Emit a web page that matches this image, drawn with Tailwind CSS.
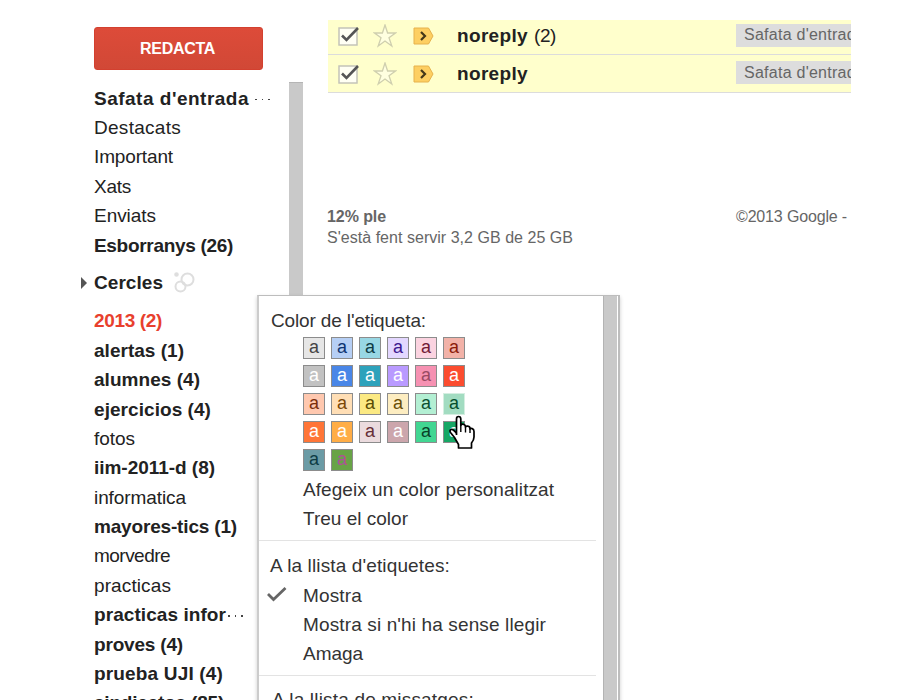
<!DOCTYPE html>
<html lang="ca">
<head>
<meta charset="utf-8">
<title>Correu</title>
<script src="https://cdn.jsdelivr.net/npm/@tailwindcss/browser@4"></script>
</head>
<body class="bg-white">
<div class="relative flex w-[900px] h-[700px] overflow-hidden bg-white font-['Liberation_Sans',Arial,sans-serif] text-[19px] text-[#222] whitespace-nowrap">

  <!-- Sidebar -->
  <aside class="w-[289px] shrink-0 pt-[27px] pl-[94px]">
    <button class="flex w-[169px] h-[43px] items-center justify-center rounded-[3px] border border-[#d3402f] bg-linear-to-b from-[#dd4b39] to-[#d14836] pr-[2px] text-[16px] font-bold text-white"><span class="font-bold" data-size="16" data-w="75">REDACTA</span></button>
    <nav class="mt-[13.6px] flex flex-col leading-[29.4px]">
      <div class="h-[29.4px] font-bold"><span data-w="155">Safata d'entrada</span><span class="ml-[6px] inline-flex gap-[5px] align-middle"><i class="size-[1.5px] bg-[#444]"></i><i class="size-[1.5px] bg-[#444]"></i><i class="size-[1.5px] bg-[#444]"></i></span></div>
      <div class="h-[29.4px]"><span data-w="87">Destacats</span></div>
      <div class="h-[29.4px]"><span data-w="79">Important</span></div>
      <div class="h-[29.4px]"><span data-w="37">Xats</span></div>
      <div class="h-[29.4px]"><span data-w="62">Enviats</span></div>
      <div class="h-[29.4px] font-bold"><span data-w="139">Esborranys (26)</span></div>
      <div class="-ml-[13px] my-[8.5px] flex h-[29.4px] items-center font-bold">
        <svg class="mr-[7px]" width="6" height="12" viewBox="0 0 6 12"><path d="M0 0L6 6L0 12Z" fill="#555"/></svg>
        <span data-w="69">Cercles</span>
        <svg class="ml-[10px]" width="24" height="24" viewBox="0 0 24 24" fill="none" stroke="#dedede" stroke-width="2"><circle cx="14.500" cy="8.500" r="6"/><circle cx="7.500" cy="15.500" r="5"/><circle cx="3.500" cy="3.500" r="1.300" fill="#dedede"/></svg>
      </div>
      <div class="h-[29.4px] font-bold text-[#e8402d]"><span data-w="68">2013 (2)</span></div>
      <div class="h-[29.4px] font-bold"><span data-w="90">alertas (1)</span></div>
      <div class="h-[29.4px] font-bold"><span data-w="106">alumnes (4)</span></div>
      <div class="h-[29.4px] font-bold"><span data-w="117">ejercicios (4)</span></div>
      <div class="h-[29.4px]"><span data-w="41">fotos</span></div>
      <div class="h-[29.4px] font-bold"><span data-w="121">iim-2011-d (8)</span></div>
      <div class="h-[29.4px]"><span data-w="92">informatica</span></div>
      <div class="h-[29.4px] font-bold"><span data-w="143">mayores-tics (1)</span></div>
      <div class="h-[29.4px]"><span data-w="76">morvedre</span></div>
      <div class="h-[29.4px]"><span data-w="77">practicas</span></div>
      <div class="h-[29.4px] font-bold"><span data-w="132">practicas infor</span><span class="ml-[2px] inline-flex gap-[5px] align-middle"><i class="size-[1.5px] bg-[#444]"></i><i class="size-[1.5px] bg-[#444]"></i><i class="size-[1.5px] bg-[#444]"></i></span></div>
      <div class="h-[29.4px] font-bold"><span data-w="89">proves (4)</span></div>
      <div class="h-[29.4px] font-bold"><span data-w="129">prueba UJI (4)</span></div>
      <div class="h-[29.4px] font-bold"><span data-w="130">sindicatos (85)</span></div>
    </nav>
  </aside>
  <div class="mt-[82px] w-[14px] shrink-0 bg-[#c9c9c9] border-t border-[#b5b5b5]"></div>

  <!-- Message list -->
  <main class="ml-[24px] mt-[20px] w-[524px] overflow-hidden">
    <div class="ml-px flex h-[35px] items-center border-b border-[#dcdcdc] bg-[#ffffcc] pb-[2px] pl-[10px]">
      <svg class="shrink-0" width="22" height="20" viewBox="0 0 22 20"><rect x="1" y="2" width="18" height="17" fill="#fffff4" stroke="#c4c4b8" stroke-width="1.500"/><path d="M4 9.500L8.500 14L20 2" fill="none" stroke="#555" stroke-width="2.600"/></svg>
      <svg class="ml-[13px] shrink-0" width="24" height="24" viewBox="0 0 24 24" fill="#ffffe0" stroke="#cfcfae" stroke-width="1.300"><path d="M12 1L14.600 9H22.500L16 13.800L18.800 22L12 17L5.200 22L8 13.800L1.500 9H9.400Z"/></svg>
      <svg class="ml-[16px] shrink-0" width="22" height="18" viewBox="0 0 22 18"><path d="M1 1H15.500L20 9L15.500 17H1Z" fill="#fdcf62" stroke="#e6b24c"/><path d="M8 5L12 9L8 13" fill="none" stroke="#443719" stroke-width="2.200"/></svg>
      <span class="ml-[22px] w-[279px] shrink-0"><b data-w="71">noreply</b><span class="ml-[6px]" data-w="22">(2)</span></span>
      <span class="mb-[2px] flex h-[23px] w-[125px] shrink-0 items-center bg-[#dddddd] pl-[8px] text-[16px] text-[#666]"><span data-size="16" data-w="121">Safata d'entrada</span></span>
    </div>
    <div class="ml-px flex h-[38px] items-center border-b border-[#dcdcdc] bg-[#ffffcc] pl-[10px] pt-px">
      <svg class="shrink-0" width="22" height="20" viewBox="0 0 22 20"><rect x="1" y="2" width="18" height="17" fill="#fffff4" stroke="#c4c4b8" stroke-width="1.500"/><path d="M4 9.500L8.500 14L20 2" fill="none" stroke="#555" stroke-width="2.600"/></svg>
      <svg class="ml-[13px] shrink-0" width="24" height="24" viewBox="0 0 24 24" fill="#ffffe0" stroke="#cfcfae" stroke-width="1.300"><path d="M12 1L14.600 9H22.500L16 13.800L18.800 22L12 17L5.200 22L8 13.800L1.500 9H9.400Z"/></svg>
      <svg class="ml-[16px] shrink-0" width="22" height="18" viewBox="0 0 22 18"><path d="M1 1H15.500L20 9L15.500 17H1Z" fill="#fdcf62" stroke="#e6b24c"/><path d="M8 5L12 9L8 13" fill="none" stroke="#443719" stroke-width="2.200"/></svg>
      <span class="ml-[22px] w-[279px] shrink-0"><b data-w="71">noreply</b></span>
      <span class="mb-[3px] flex h-[23px] w-[125px] shrink-0 items-center bg-[#dddddd] pl-[8px] text-[16px] text-[#666]"><span data-size="16" data-w="121">Safata d'entrada</span></span>
    </div>
    <footer class="mt-[113px] flex text-[16px] leading-[21px] text-[#666]">
      <div class="w-[409px]">
        <div class="font-bold"><span data-size="16" data-w="59">12% ple</span></div>
        <div><span data-size="16" data-w="246">S'està fent servir 3,2 GB de 25 GB</span></div>
      </div>
      <div><span data-size="16" data-w="111">©2013 Google -</span></div>
    </footer>
  </main>

  <!-- Label menu -->
  <div class="absolute left-[257px] top-[295px] flex h-[420px] w-[363px] justify-between border-2 border-t border-[#cccccc] border-t-[#bdbdbd] border-r-[#bdbdbd] bg-white text-[#333] shadow-[0_2px_4px_rgba(0,0,0,0.2)]">
    <div class="w-[337px] pt-[10px] leading-[29.4px]">
      <div class="h-[29.4px] pl-[12px]"><span data-w="155">Color de l'etiqueta:</span></div>
      <div class="ml-[44px] mt-[2px] grid w-max grid-cols-6 gap-[6px] text-center text-[18px] leading-[19px] *:size-[22px] *:border-[1.5px] *:border-[#8c8c8c]">
        <div class="bg-[#e6e6e6] text-[#444]">a</div>
        <div class="bg-[#b6cff5] text-[#0d3472]">a</div>
        <div class="bg-[#98d7e4] text-[#0d3b44]">a</div>
        <div class="bg-[#e3d7ff] text-[#3d188e]">a</div>
        <div class="bg-[#fbd3e0] text-[#711a36]">a</div>
        <div class="bg-[#f2b2a8] text-[#8a1c0a]">a</div>
        <div class="bg-[#c2c2c2] text-white">a</div>
        <div class="bg-[#4986e7] text-white">a</div>
        <div class="bg-[#2da2bb] text-white">a</div>
        <div class="bg-[#b99aff] text-white">a</div>
        <div class="bg-[#f691b2] text-[#994a64]">a</div>
        <div class="bg-[#fb4c2f] text-white">a</div>
        <div class="bg-[#ffc8af] text-[#7a2e0b]">a</div>
        <div class="bg-[#ffdeb5] text-[#7a4706]">a</div>
        <div class="bg-[#fbe983] text-[#594c05]">a</div>
        <div class="bg-[#fdedc1] text-[#684e07]">a</div>
        <div class="bg-[#b3efd3] text-[#0b4f30]">a</div>
        <div class="border-[#d5eee1]! bg-[#a2dcc1] text-[#04502e]">a</div>
        <div class="bg-[#ff7537] text-white">a</div>
        <div class="bg-[#ffad46] text-white">a</div>
        <div class="bg-[#ebdbde] text-[#662e37]">a</div>
        <div class="bg-[#cca6ac] text-white">a</div>
        <div class="bg-[#42d692] text-[#094228]">a</div>
        <div class="bg-[#16a765] text-white">a</div>
        <div class="bg-[#6b9ba5] text-[#0d3b44]">a</div>
        <div class="bg-[#68a346] text-[#b0509a]">a</div>
      </div>
      <div class="mt-[3.500px] h-[29.4px] pl-[44px]"><span data-w="251">Afegeix un color personalitzat</span></div>
      <div class="h-[29.4px] pl-[44px]"><span data-w="105">Treu el color</span></div>
      <div class="mt-[6.500px] h-px bg-[#e3e3e3]"></div>
      <div class="mt-[10px] h-[29.4px] pl-[11px]"><span data-w="181">A la llista d'etiquetes:</span></div>
      <div class="flex h-[29.4px] items-center pl-[8px]"><svg class="mb-[3px] mr-[16px]" width="20" height="18" viewBox="0 0 20 18"><path d="M1 9L6.500 14.500L18.500 3" fill="none" stroke="#666" stroke-width="2.800"/></svg><span data-w="59">Mostra</span></div>
      <div class="h-[29.4px] pl-[44px]"><span data-w="243">Mostra si n'hi ha sense llegir</span></div>
      <div class="h-[29.4px] pl-[44px]"><span data-w="60">Amaga</span></div>
      <div class="mt-[6px] h-px bg-[#e3e3e3]"></div>
      <div class="mt-[9px] h-[29.4px] pl-[13px]"><span data-w="203">A la llista de missatges:</span></div>
    </div>
    <div class="mr-px w-[14px] border-l border-[#b3b3b3] bg-[#c9c9c9]"></div>
  </div>

  <!-- Hand pointer -->
  <svg class="absolute left-[448px] top-[415px]" width="28" height="35" viewBox="0 0 28 35"><path d="M8.500 20V4Q8.500 1.500 10.500 1.500Q12.800 1.500 12.800 4V10.500Q13 8.800 15.500 9.300Q17.500 9.800 17.500 12Q18 10.800 20 11.200Q22 11.500 22 14Q22.500 13 24.200 13.600Q26 14.200 26 16.500V22Q26 25 23.500 28V33H10.500V29.500L6.500 22.500L2.500 17.500Q1.300 15.500 3 14.500Q5 13.800 8.500 18.500" fill="#fff" stroke="#000" stroke-width="1.700" stroke-linejoin="round"/><path d="M12.800 10V17M17.500 12V17.500M22 14V18" fill="none" stroke="#000" stroke-width="1.400"/></svg>
</div>
<script>
  var pen = document.createElement('canvas').getContext('2d');
  document.querySelectorAll('[data-w]').forEach(function (el) {
    var weight = el.closest('b, .font-bold') ? 'bold ' : '';
    pen.font = weight + (el.dataset.size || 19) + 'px "Liberation Sans", Arial, sans-serif';
    var gap = (Number(el.dataset.w) - pen.measureText(el.textContent).width) / el.textContent.length;
    el.style.letterSpacing = gap.toFixed(3) + 'px';
  });
</script>
</body>
</html>
